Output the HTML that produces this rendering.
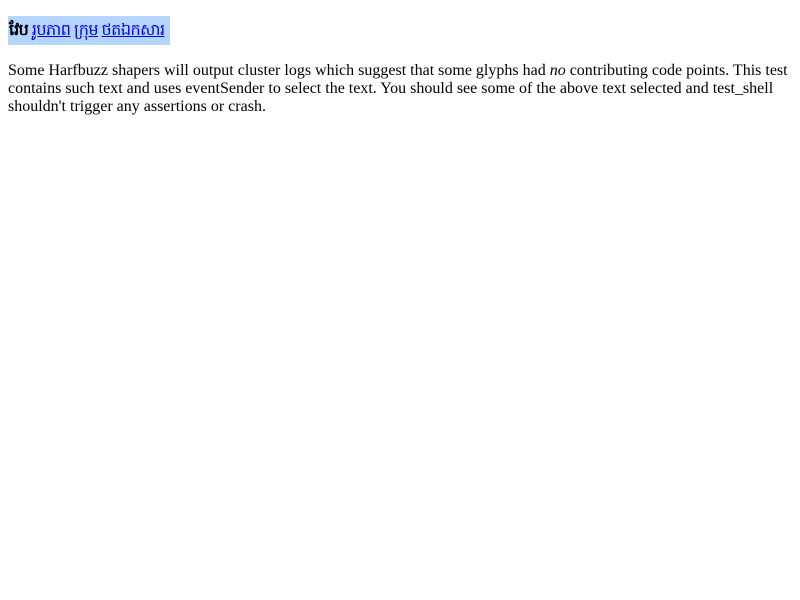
<!DOCTYPE html>
<html><head><meta charset="utf-8"><style>
html,body{margin:0;background:#fff}
body{padding:8px;font-family:"Liberation Serif",serif;font-size:16px;line-height:18px;color:#000}
.sel{display:inline-block;background:#b4d5fe;margin-top:8px;height:29px;line-height:29px;font-size:16px;letter-spacing:-0.5px;padding:0 1px;width:160px;white-space:nowrap;overflow:hidden}
.sel b{font-weight:bold}
a{color:#00e;text-decoration:underline}
p{margin:12px 0 0 0}
</style></head><body>
<div class="sel"><b>វែប</b> <a>រូបភាព</a> <a>ក្រុម</a> <a>ថតឯកសារ</a></div>
<p>Some Harfbuzz shapers will output cluster logs which suggest that some glyphs had <i>no</i> contributing code points. This test contains such text and uses eventSender to select the text. You should see some of the above text selected and test_shell shouldn't trigger any assertions or crash.</p>
</body></html>
